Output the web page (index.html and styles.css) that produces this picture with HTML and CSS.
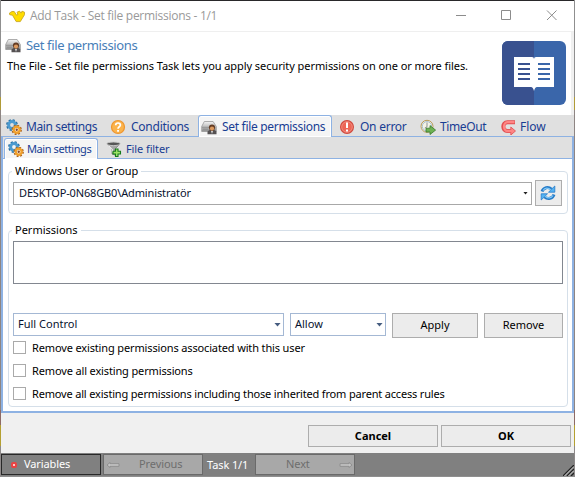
FILE: index.html
```html
<!DOCTYPE html>
<html lang="en">
<head>
<meta charset="utf-8">
<title>Add Task</title>
<link rel="stylesheet" href="styles.css">
</head>
<body>
<svg class="defs" aria-hidden="true">
  <defs>
    <linearGradient id="metal" x2="0" y2="1"><stop stop-color="#f4f4f4"/><stop offset="1" stop-color="#8c8c8c"/></linearGradient>
    <symbol id="gears" viewBox="0 0 16 16">
      <circle cx="6" cy="6" r="4.9" fill="none" stroke="#226a9e" stroke-width="2" stroke-dasharray="2.1 1.75"/>
      <circle cx="6" cy="6" r="3.4" fill="none" stroke="#4c9bd0" stroke-width="3"/>
      <circle cx="10.7" cy="10.8" r="4.2" fill="none" stroke="#a95f18" stroke-width="2" stroke-dasharray="1.8 1.5"/>
      <circle cx="10.7" cy="10.8" r="3" fill="#fff" stroke="#f0a02c" stroke-width="2.4"/>
      <circle cx="10.7" cy="10.8" r="1.2" fill="#8a4a24"/>
    </symbol>
    <symbol id="drive" viewBox="0 0 16 16">
      <path d="M3.3 2.5h8.8l3.2 5v5H.7v-5z" fill="url(#metal)" stroke="#999" stroke-width=".8"/>
      <path d="M1 8.3h8M2 10.2h5" stroke="#8a8a8a" stroke-width=".8"/>
      <path d="M6.500 15.200v-2.700l2.700-1.900h3.600l2.700 1.900v2.700z" fill="#555152"/>
      <circle cx="11" cy="8.500" r="3.100" fill="#633c25"/><circle cx="11" cy="9.600" r="2.100" fill="#dc995e"/>
      <path d="M10 12h2l-1 3z" fill="#ddd"/>
    </symbol>
    <symbol id="question" viewBox="0 0 16 16">
      <circle cx="8" cy="8" r="6.500" fill="#fbb34c" stroke="#ee952e" stroke-width="1.200"/>
      <path d="M5.700 6.300c0-3 4.700-3 4.700-.2C10.400 7.800 8 7.700 8 9.700" fill="none" stroke="#fff" stroke-width="1.700"/><path d="M7.100 11h1.900v1.800H7.100z" fill="#fff"/>
    </symbol>
    <symbol id="error" viewBox="0 0 16 16">
      <circle cx="8" cy="8" r="6.400" fill="#ec6657" stroke="#cf4b40" stroke-width="1.200"/>
      <circle cx="8" cy="8" r="5.300" fill="none" stroke="#f5998b" stroke-width=".7"/>
      <path d="M7 3.600h2v5.400H7zM7 10.500h2v2H7z" fill="#fff"/>
    </symbol>
    <symbol id="clock" viewBox="0 0 16 16">
      <circle cx="7" cy="7.300" r="6" fill="#f4f3e6" stroke="#b99b57" stroke-width="1"/>
      <circle cx="7" cy="7.300" r="4.700" fill="none" stroke="#a7bdd0" stroke-width="1"/>
      <path d="M7 3.500v4.300L4.800 9" fill="none" stroke="#8e9095" stroke-width="1"/>
      <path d="M6 9.200h4V6.600l5.600 4.500-5.600 4.400V13H6z" fill="#6eb253" stroke="#377a2b" stroke-width=".8"/>
    </symbol>
    <symbol id="flow" viewBox="0 0 16 16">
      <path d="M14 3.200H6.500C.9 3.200.9 12 6.500 12H11" fill="none" stroke="#e14e50" stroke-width="4"/>
      <path d="M9.800 8l4.700 4-4.700 4z" fill="#ff8584" stroke="#e14e50" stroke-width=".8"/>
      <path d="M13.500 3.200H6.500C1.900 3.200 1.900 12 6.500 12H11.500" fill="none" stroke="#ff8584" stroke-width="2.300"/>
    </symbol>
    <symbol id="filter" viewBox="0 0 16 16">
      <path d="M1 3l5 5v5l3 1V8l5-5z" fill="#a5a5a5" stroke="#777" stroke-width=".7"/>
      <ellipse cx="7.500" cy="2.800" rx="6.700" ry="1.800" fill="#555" stroke="#ccc" stroke-width=".9"/>
      <path d="M2.500 4.600l4 3.700v3" fill="none" stroke="#eee" stroke-width="1"/>
      <path d="M9.500 8h2.500v2.300h2.500V13H12v2.500H9.500V13H7v-2.700h2.500z" fill="#9ee368" stroke="#147b1b" stroke-width="1.100"/>
    </symbol>
    <symbol id="refresh" viewBox="0 0 16 16">
      <path d="M2 6.500C3.500 2.300 8.200 1.300 11.500 4.200M14 9.500c-1.500 4.200-6.200 5.200-9.500 2.300" fill="none" stroke="#247bc9" stroke-width="3"/>
      <path d="M8.500 7.200h6.300V1zM7.500 8.800H1.200V15z" fill="#55b3f2" stroke="#247bc9" stroke-width=".8"/>
      <path d="M3 5.500C5 2.500 8 2.200 10.800 4.800M13 10.500c-2 3-5 3.300-7.800.7" fill="none" stroke="#82c8f5" stroke-width="1.300"/>
    </symbol>
  </defs>
</svg>
<div class="window">
  <header class="titlebar">
    <svg class="logo" viewBox="0 0 16 13"><path d="M.5 3L3 1.500h2.200l2.300 3.600L9 4.500 8 2.300l2.500-1.200 1.600 2L13 1.200l2.500 1v2.500l-4.200 6.900H7.200L3.500 5.200.7 4.700z" fill="#ffdc00" stroke="#c9a822" stroke-width=".9"/></svg>
    <span class="title">Add Task - Set file permissions - 1/1</span>
    <svg class="controls" viewBox="0 0 102 12"><path d="M0 6.500h10M45.500 1.500h9v9h-9zM91 1.500l9.500 9.500M100.500 1.500L91 11" fill="none" stroke="#8c8c8c"/></svg>
  </header>
  <section class="intro">
    <div class="intro-text">
      <h1><svg class="icon"><use href="#drive"/></svg><span>Set file permissions</span></h1>
      <p>The File - Set file permissions Task lets you apply security permissions on one or more files.</p>
    </div>
    <svg class="book" viewBox="0 0 64 64">
      <rect width="64" height="64" rx="6" fill="#3a66aa"/><path d="M6 0h26v64H6a6 6 0 0 1-6-6V6a6 6 0 0 1 6-6z" fill="#39518f"/>
      <path d="M12 16h18q2 0 2 2 0-2 2-2h18v30H35q-2 0-3 4-1-4-3-4H12z" fill="#fff"/>
      <path d="M16 23h12M16 28h12M16 33h12M16 38h12" stroke="#39518f" stroke-width="2"/><path d="M36 23h12M36 28h12M36 33h12M36 38h12" stroke="#3a66aa" stroke-width="2"/>
    </svg>
  </section>
  <nav class="tabs">
    <div class="tab t-main"><svg class="icon"><use href="#gears"/></svg><span>Main settings</span></div>
    <div class="tab t-cond"><svg class="icon"><use href="#question"/></svg><span>Conditions</span></div>
    <div class="tab t-perm active"><svg class="icon"><use href="#drive"/></svg><span>Set file permissions</span></div>
    <div class="tab t-error"><svg class="icon"><use href="#error"/></svg><span>On error</span></div>
    <div class="tab t-time"><svg class="icon"><use href="#clock"/></svg><span>TimeOut</span></div>
    <div class="tab t-flow"><svg class="icon"><use href="#flow"/></svg><span>Flow</span></div>
  </nav>
  <main class="panel">
    <nav class="subtabs">
      <div class="subtab active"><svg class="icon"><use href="#gears"/></svg><span>Main settings</span></div>
      <div class="subtab"><svg class="icon"><use href="#filter"/></svg><span>File filter</span></div>
    </nav>
    <div class="content">
      <fieldset class="user-group">
        <legend>Windows User or Group</legend>
        <div class="row">
          <div class="combo user"><span>DESKTOP-0N68GB0\Administratör</span><i class="arrow small"></i></div>
          <button class="btn refresh"><svg class="icon"><use href="#refresh"/></svg></button>
        </div>
      </fieldset>
      <fieldset class="permissions">
        <legend>Permissions</legend>
        <div class="list"></div>
        <div class="row actions">
          <div class="combo blue access"><span>Full Control</span><i class="arrow"></i></div>
          <div class="combo blue allow"><span>Allow</span><i class="arrow"></i></div>
          <button class="btn apply"><span>Apply</span></button>
          <button class="btn remove"><span>Remove</span></button>
        </div>
        <div class="check"><i></i><span>Remove existing permissions associated with this user</span></div>
        <div class="check"><i></i><span>Remove all existing permissions</span></div>
        <div class="check"><i></i><span class="long">Remove all existing permissions including those inherited from parent access rules</span></div>
      </fieldset>
    </div>
  </main>
  <footer class="buttons"><button class="btn"><span>Cancel</span></button><button class="btn"><span>OK</span></button></footer>
  <div class="status">
    <div class="cell variables"><i class="dot"></i><span>Variables</span></div>
    <div class="cell off previous"><svg viewBox="0 0 14 8"><path d="M1 4l3-2.500v1.200h9v2.600H4v1.200z"/></svg><span>Previous</span></div>
    <div class="count"><span>Task 1/1</span></div>
    <div class="cell off next"><span>Next</span><svg viewBox="0 0 14 8"><path d="M13 4l-3-2.500v1.200H1v2.600h9v1.200z"/></svg></div>
    <svg class="grip" viewBox="0 0 11 11"><path d="M0 11L11 0M4 11l7-7M8 11l3-3" stroke="#222" stroke-width="1.300"/><path d="M1.500 11L11 1.500M5.500 11L11 5.500" stroke="#ddd" stroke-width=".8"/></svg>
  </div>
</div>
</body>
</html>
```
FILE: styles.css
```css
* { box-sizing: border-box; }
body {
  margin: 0;
  width: 575px;
  height: 477px;
  overflow: hidden;
  background: linear-gradient(#8f8f8f 0 97px, #b09b37 97px 110px, #8e8583 110px 410px, #8d6a65 410px 425px, #b4a031 425px 446px, #8d8989 446px);
  font: 11px/14px "Noto Sans", sans-serif;
  color: #000;
}
.defs { position: absolute; width: 0; height: 0; }
span { white-space: nowrap; }
.icon { width: 16px; height: 16px; flex: none; }
.window {
  width: 573px;
  height: 477px;
  margin-left: 1px;
  display: grid;
  grid-template-rows: 31px 83px 21px 277px 40px 24px;
  border-top: 1px solid #29282a;
  background: #f0f0f0;
}
.titlebar { display: flex; align-items: center; background: #fff; border-bottom: 1px solid #efefef; padding: 0 16px 0 8px; }
.logo { width: 16px; height: 13px; }
.title { margin-left: 5px; font: 12px/16px "Open Sans", sans-serif; color: #999; letter-spacing: -.28px; }
.controls { width: 102px; height: 12px; margin: 0 0 2px auto; }
.intro { display: flex; justify-content: space-between; margin-right: 3px; padding: 5px 5px 0 4px; background: #fff; }
.intro-text { flex: 1; }
h1 { display: flex; align-items: center; gap: 5px; margin: 0; height: 16px; font-size: 13px; font-weight: 400; color: #477eb8; letter-spacing: -.36px; }
.intro p { margin: 6px 0 0 2px; white-space: nowrap; letter-spacing: -.07px; }
.book { width: 64px; height: 64px; margin-top: 4px; }
.tabs, .subtabs { display: flex; background: #e0e0e0; color: #183d93; }
.tabs { font-size: 12px; height: 22px; z-index: 1; border-bottom: 1px solid #8eb2e3; }
.tab { display: flex; align-items: center; gap: 4px; padding: 2px 0 0 5px; height: 22px; letter-spacing: -.38px; }
.t-main { width: 104px; }
.t-cond { width: 93px; }
.t-cond span { letter-spacing: -.25px; margin-left: 1px; }
.tab.t-perm { width: 134px; padding: 1px 0 0 2px; }
.t-perm span { letter-spacing: -.31px; margin-left: 1px; }
.t-error { width: 86px; padding-left: 7px; gap: 5px; letter-spacing: -.25px; }
.t-time { width: 82px; padding-left: 2px; }
.t-flow { padding-left: 1px; gap: 3px; letter-spacing: 0; }
.tab.active, .subtab.active { background: #f5f5f5; border: 1px solid #8eb2e3; border-bottom: 0; border-radius: 3px 3px 0 0; box-shadow: inset 0 0 0 1px #fff; }
.panel { border: solid #8eb2e3; border-width: 1px 2px 2px; background: #fff; }
.subtabs { height: 22px; border-bottom: 1px solid #8eb2e3; padding: 1px 0 0 1px; }
.subtab { display: flex; align-items: center; gap: 4px; padding-left: 8px; height: 21px; letter-spacing: -.1px; }
.subtab.active { width: 94px; padding-left: 3px; gap: 3px; letter-spacing: -.42px; }
.content { padding: 5px 4px 0 5px; }
fieldset { min-width: 0; margin: 0; padding: 0 4px; border: 1px solid #d5dfe9; border-radius: 4px; }
legend { padding: 0 3px; margin-left: -1px; height: 14px; line-height: 13px; }
.user-group { height: 50px; }
.permissions { height: 184px; margin-top: 9px; }
.row { display: flex; }
.user-group .row { margin-top: 2px; align-items: center; }
.combo { display: flex; align-items: center; justify-content: space-between; height: 23px; border: 1px solid #a8a8a8; background: #fff; color: #08122e; padding-left: 5px; }
.user { width: 519px; padding-right: 3px; margin-right: 3px; letter-spacing: -.14px; }
.user span { padding-bottom: 1px; }
.blue { border-color: #a4b8d4; padding-left: 4px; padding-right: 2px; }
.blue span { padding-bottom: 1px; }
.arrow { width: 7px; height: 4px; background: #465d80; clip-path: polygon(0 0, 100% 0, 50% 100%); }
.arrow.small { width: 5px; height: 3px; background: #222; }
.btn { display: flex; align-items: center; justify-content: center; padding: 0; height: 26px; border: 1px solid #adadad; background: #ececec; font: inherit; color: #000; }
.refresh { width: 27px; }
.refresh .icon { margin-right: 2px; }
.list { height: 43px; width: 550px; margin-top: 4px; border: 1px solid #828790; }
.actions { margin-top: 29px; height: 28px; }
.access { width: 271px; }
.allow { width: 96px; margin-left: 6px; }
.actions .btn { height: 25px; margin-left: 6px; }
.actions .btn span { padding-bottom: 1px; }
.apply { width: 86px; }
.remove { width: 79px; }
.check { display: flex; align-items: center; height: 13px; margin-bottom: 10px; letter-spacing: -.14px; }
.check .long { letter-spacing: -.175px; }
.check i { width: 13px; height: 13px; border: 1px solid #aaa; margin-right: 6px; }
.buttons { display: flex; justify-content: flex-end; gap: 3px; padding: 12px 3px 0; font-weight: 700; }
.buttons .btn { width: 130px; height: 22px; }
.buttons .btn span { padding-bottom: 1px; }
.status { display: flex; align-items: center; background: #808080; border-bottom: 1px solid #8f8f8f; color: #fff; height: 24px; }
.cell { display: flex; align-items: center; width: 100px; height: 21px; border: 1px solid #282828; }
.cell span, .count span { padding-bottom: 1px; letter-spacing: -.1px; }
.dot { width: 6px; height: 6px; margin: 1px 7px 0 9px; border: 2px solid #e94343; border-radius: 2px; background: #ffc6c6; }
.off { background: #a8a8a8; border-color: #6a6a6a; color: #6e6e6e; }
.cell svg { width: 14px; height: 8px; fill: #c4c4c4; stroke: #8c8c8c; stroke-width: .9; }
.previous { margin-left: 2px; padding-left: 2px; gap: 19px; }
.count { width: 52px; padding-left: 4px; }
.next { padding-left: 30px; padding-right: 1px; justify-content: space-between; }
.grip { width: 11px; height: 11px; margin: auto 0 0 auto; }
```
